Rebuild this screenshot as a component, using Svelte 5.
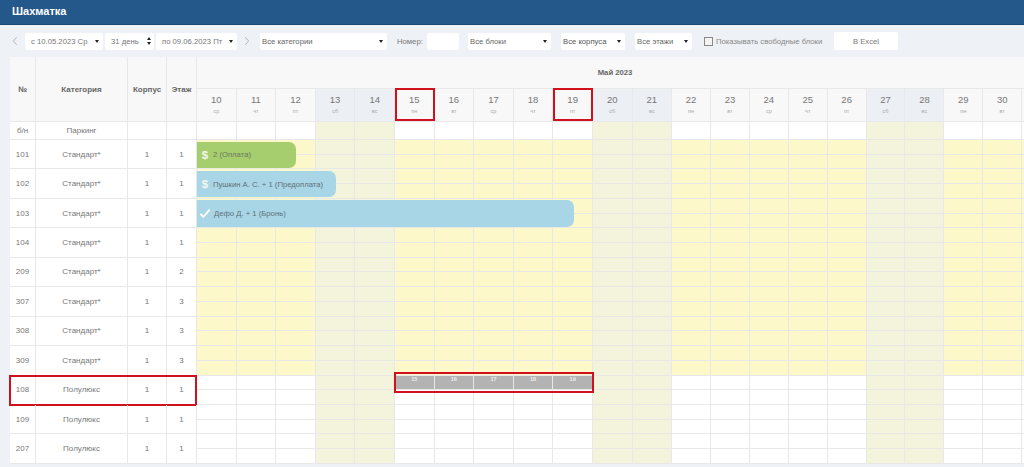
<script>
  const days = [
    [10,'ср'],[11,'чт'],[12,'пт'],[13,'сб'],[14,'вс'],[15,'пн'],[16,'вт'],[17,'ср'],[18,'чт'],[19,'пт'],[20,'сб'],[21,'вс'],
    [22,'пн'],[23,'вт'],[24,'ср'],[25,'чт'],[26,'пт'],[27,'сб'],[28,'вс'],[29,'пн'],[30,'вт'],[31,'']
  ].map(([n, w], i) => ({ n, w, off: w === 'сб' || w === 'вс', width: i < 12 ? 39.6 : i === 21 ? 3 : 38.9 }));
  const rooms = [
    ['101','Стандарт*','1','1',true],['102','Стандарт*','1','1',true],['103','Стандарт*','1','1',true],
    ['104','Стандарт*','1','1',true],['209','Стандарт*','1','2',true],['307','Стандарт*','1','3',true],
    ['308','Стандарт*','1','3',true],['309','Стандарт*','1','3',true],
    ['108','Полулюкс','1','1',false],['109','Полулюкс','1','1',false],['207','Полулюкс','1','1',false]
  ];
  const marked = [15,16,17,18,19];
</script>

<div class="page">
  <header class="top"><h1>Шахматка</h1></header>

  <div class="bar">
    <svg class="chev first" viewBox="0 0 8 12"><path d="M6 1.500 2 6l4 4.500"/></svg>
    <div class="sel w1">с 10.05.2023 Ср<i class="tri"></i></div>
    <div class="sel w2">31 день<span class="spin"><i></i><i></i></span></div>
    <div class="sel w3">по 09.06.2023 Пт<i class="tri"></i></div>
    <svg class="chev next" viewBox="0 0 8 12"><path d="M2 1.500 6 6l-4 4.500"/></svg>
    <div class="sel w4">Все категории<i class="tri"></i></div>
    <span class="lbl">Номер:</span>
    <div class="sel w5"></div>
    <div class="sel w6">Все блоки<i class="tri"></i></div>
    <div class="sel w7">Все корпуса<i class="tri"></i></div>
    <div class="sel w8">Все этажи<i class="tri"></i></div>
    <label class="chk"><span class="box"></span>Показывать свободные блоки</label>
    <button class="xl">В Excel</button>
  </div>

  <div class="board">
    <div class="row head">
      <div class="c no">№</div>
      <div class="c cat">Категория</div>
      <div class="c korp">Корпус</div>
      <div class="c fl">Этаж</div>
      <div class="cal">
        <div class="month">Май 2023</div>
        <div class="dayhead">
          {#each days as d}
            <div class="dh" class:off={d.off} style:width="{d.width}px">
              {#if d.w}<b>{d.n}</b><small>{d.w}</small>{/if}
              {#if d.n === 15 || d.n === 19}<span class="frame"></span>{/if}
            </div>
          {/each}
        </div>
      </div>
    </div>

    <div class="row park">
      <div class="c no">б/н</div>
      <div class="c cat">Паркинг</div>
      <div class="c korp"></div>
      <div class="c fl"></div>
      <div class="days">
        {#each days as d}<div class="pd" class:off={d.off} style:width="{d.width}px"></div>{/each}
      </div>
    </div>

    {#each rooms as r, i}
      <div class="row room">
        <div class="c no">{r[0]}</div>
        <div class="c cat">{r[1]}</div>
        <div class="c korp">{r[2]}</div>
        <div class="c fl">{r[3]}</div>
        <div class="days">
          {#each days as d}
            <div class="day" class:free={r[4]} class:off={d.off} style:width="{d.width}px">
              <div class="half" class:mark={r[0] === '108' && marked.includes(d.n)}>
                {#if r[0] === '108' && marked.includes(d.n)}{d.n}{/if}
              </div>
              <div class="half"></div>
            </div>
          {/each}
          {#if i === 0}
            <div class="bk green b1"><span class="ic">$</span>2 (Оплата)</div>
          {:else if i === 1}
            <div class="bk blue b2"><span class="ic">$</span>Пушкин А. С. + 1 (Предоплата)</div>
          {:else if i === 2}
            <div class="bk blue b3">
              <svg class="tick" viewBox="0 0 14 12"><path d="M1.500 6.500 5 10l7.500-8.500"/></svg>Дефо Д. + 1 (Бронь)
            </div>
          {/if}
          {#if r[0] === '108'}<span class="rangeframe"></span>{/if}
        </div>
        {#if r[0] === '108'}<span class="rowframe"></span>{/if}
      </div>
    {/each}
  </div>
</div>

<style>
  :global(body) { margin: 0; }
  .page {
    width: 1024px; height: 467px; overflow: hidden; background: #eef1f5;
    font-family: "Liberation Sans", Arial, sans-serif; color: #777;
  }
  .top {
    height: 24px; background: #24578a; border-bottom: 1px solid #1b4a78;
    display: flex; align-items: center; padding: 0 0 2px 12px; box-sizing: content-box;
    height: 22px;
  }
  h1 { margin: 0; font-size: 11px; font-weight: 700; color: #fff; }

  .bar { height: 32px; display: flex; align-items: center; font-size: 7.700px; }
  .chev { width: 8px; height: 10px; fill: none; stroke: #aab4c4; stroke-width: 1.100; flex: none; }
  .first { margin-left: 11px; margin-right: 6px; }
  .next { margin-left: 6px; margin-right: 9px; }
  .sel {
    height: 17px; background: #fff; border-radius: 2px; display: flex; align-items: center;
    box-sizing: border-box; position: relative; flex: none; white-space: nowrap;
  }
  .tri {
    position: absolute; right: 4px; top: 7px; width: 0; height: 0;
    border: 2.500px solid transparent; border-top: 3px solid #222; border-bottom: 0;
  }
  .w1 { width: 78px; padding-left: 6px; margin-right: 2px; }
  .w2 { width: 49px; padding-left: 6px; margin-right: 2px; }
  .w3 { width: 81px; padding-left: 6px; }
  .w4 { width: 127px; padding-left: 2px; color: #666; }
  .lbl { margin-left: 10px; width: 30px; flex: none; }
  .w5 { width: 32px; }
  .w6 { width: 83px; margin-left: 9px; padding-left: 2px; color: #666; }
  .w7 { width: 64px; margin-left: 10px; padding-left: 2px; color: #555; }
  .w8 { width: 57px; margin-left: 10px; padding-left: 2px; color: #666; }
  .spin { position: absolute; right: 3px; top: 4px; display: flex; flex-direction: column; gap: 2px; }
  .spin i { display: block; width: 0; height: 0; border: 2.500px solid transparent; border-bottom: 3px solid #222; border-top: 0; }
  .spin i + i { border-bottom: 0; border-top: 3px solid #222; }
  .chk { display: flex; align-items: center; margin-left: 12px; color: #888; width: 118px; white-space: nowrap; flex: none; }
  .box { width: 7px; height: 7px; border: 1px solid #888; background: #f3f3f3; margin-right: 3px; flex: none; }
  .xl {
    width: 64px; height: 18px; border: 0; background: #fff; border-radius: 2px; padding: 0;
    font: 7.700px "Liberation Sans", Arial, sans-serif; color: #777; margin-left: 12px; flex: none;
  }

  .board { margin-left: 10px; background: #fff; }
  .row { display: flex; position: relative; }
  .c {
    box-sizing: border-box; flex: none; display: flex; align-items: center; justify-content: center;
    border-right: 1px solid #e8e8e8; border-bottom: 1px solid #e8e8e8; font-size: 8px;
  }
  .no { width: 26px; } .cat { width: 92px; } .korp { width: 39px; } .fl { width: 30px; }
  .head { height: 65px; background: #f8f8f8; }
  .head .c { font-weight: 700; font-size: 8px; color: #666; }
  .cal { flex: none; display: flex; flex-direction: column; }
  .month {
    height: 32px; display: flex; align-items: center; justify-content: center; width: 836px;
    font-size: 7.700px; font-weight: 700; color: #666; border-bottom: 1px solid #e8e8e8; box-sizing: border-box;
  }
  .dayhead { display: flex; height: 33px; }
  .dh {
    box-sizing: border-box; flex: none; position: relative;
    border-right: 1px solid #e8e8e8; border-bottom: 1px solid #e8e8e8;
    display: flex; flex-direction: column; align-items: center; padding-top: 5px;
  }
  .dh b { font-weight: 400; font-size: 9.500px; line-height: 12px; color: #777; }
  .dh small { font-size: 5.500px; line-height: 10px; color: #aaa; }
  .dh.off { background: #eceff3; }
  .frame {
    position: absolute; left: 0; top: -1px; right: -1px; height: 33px; box-sizing: border-box;
    border: 2px solid #d0101a;
  }
  .days { display: flex; position: relative; flex: none; }
  .park { height: 18px; }
  .pd { box-sizing: border-box; flex: none; background: #fff; border-right: 1px solid #e8e8e8; border-bottom: 1px solid #e8e8e8; }
  .pd.off { background: #f4f3dc; }
  .room { height: 29.450px; }
  .day { box-sizing: border-box; flex: none; background: #fff; border-right: 1px solid #e8e8e8; display: flex; flex-direction: column; }
  .day.free { background: #fdf8c9; }
  .day.off { background: #f4f3dc; }
  .half {
    height: 50%; box-sizing: border-box; border-bottom: 1px solid #e8e8e8;
    font-size: 5.500px; font-weight: 700; color: #eee; text-align: center; line-height: 6px;
  }
  .mark { background: #b3b3b3; }
  .bk {
    position: absolute; top: 1.500px; left: 0; height: 26.500px; box-sizing: border-box;
    display: flex; align-items: center; font-size: 7.700px; color: #6a7a60;
    border-radius: 0 7px 7px 0; white-space: nowrap;
  }
  .green { background: #a6cd6e; }
  .blue { background: #a9d6e6; color: #5f7078; }
  .b1 { width: 99px; } .b2 { width: 139px; } .b3 { width: 377px; }
  .ic { width: 16px; text-align: center; font-size: 11.500px; font-weight: 700; color: #f2f7ee; }
  .tick { width: 12px; height: 11px; margin: 0 3px 0 2px; fill: none; stroke: #fff; stroke-width: 2.200; flex: none; }
  .rowframe {
    position: absolute; left: -1px; top: -1px; width: 188px; height: 31px; box-sizing: border-box;
    border: 2px solid #d0101a; pointer-events: none;
  }
  .rangeframe {
    position: absolute; left: 197px; top: -4px; width: 200px; height: 21px; box-sizing: border-box;
    border: 2px solid #d0101a;
  }
</style>
